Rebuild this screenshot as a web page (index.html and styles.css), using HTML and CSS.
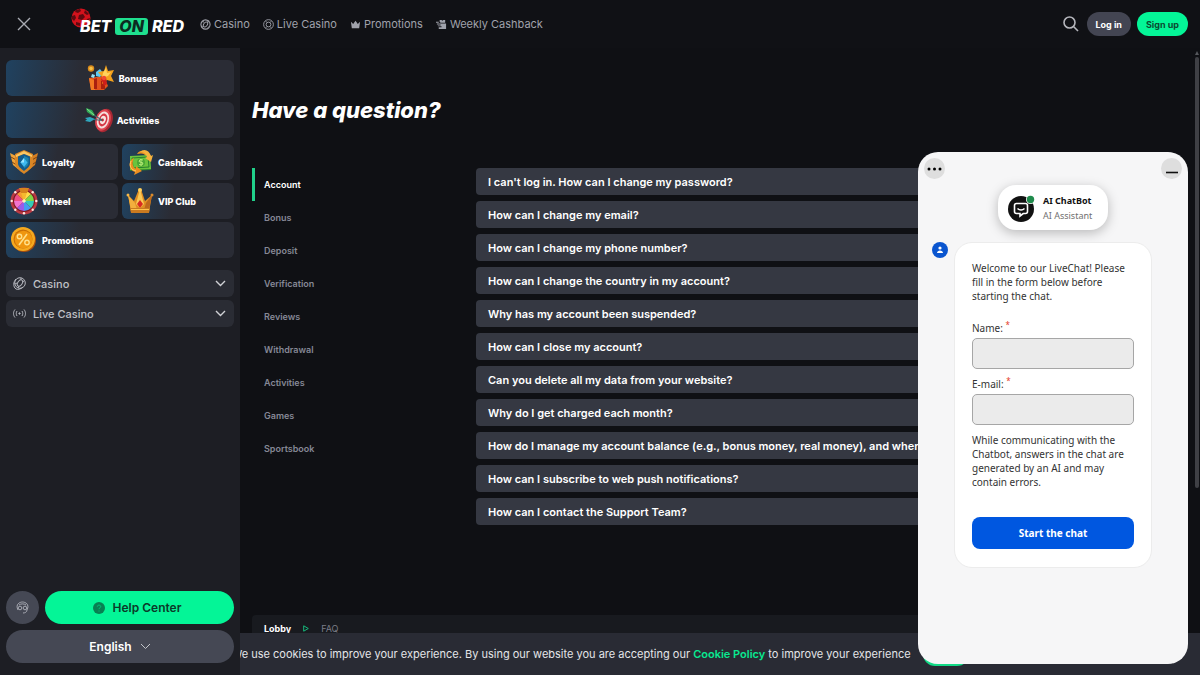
FILE: index.html
```html
<!DOCTYPE html>
<html lang="en">
<head>
  <meta charset="UTF-8" />
  <meta name="viewport" content="width=device-width, initial-scale=1.0" />
  <title>Have a question? | BetOnRed</title>
  <link rel="stylesheet" href="styles.css">
</head>
<body>
  <header class="header">
    <button class="close-btn" aria-label="Close menu">
      <svg width="14" height="14" viewBox="0 0 14 14"><path d="M1 1l12 12M13 1L1 13" stroke="#a9abb3" stroke-width="1.4" fill="none"/></svg>
    </button>
    <a href="#" class="logo" aria-label="Bet On Red">
      <svg class="logo-ball" width="20" height="20" viewBox="0 0 20 20">
        <circle cx="10" cy="10" r="9.500" fill="#d3121c"/>
        <g fill="#5e0a10">
          <path d="M8 7l4-1 2 3-3 3-4-1z"/>
          <path d="M5 2l4-1 1 2-3 2-3-1z"/>
          <path d="M14 2l4 4-2 1-3-2z"/>
          <path d="M1 8l3-1 1 3-2 3-2-2z"/>
          <path d="M5 14l4 1v3l-4-1z"/>
          <path d="M16 11l3-1-2 5-2-1z"/>
        </g>
      </svg>
      <span>BET</span><span class="logo-on">ON</span><span>RED</span>
    </a>
    <nav class="top-nav">
      <a href="#">
        <svg width="11" height="11" viewBox="0 0 12 12"><circle cx="6" cy="6" r="5" fill="none" stroke="#a0a2ab" stroke-width="1.2"/><ellipse cx="6" cy="6" rx="2" ry="3" fill="none" stroke="#a0a2ab" transform="rotate(35 6 6)"/><path d="M7 1l3 1-1 2zM1 7l2 1-1 2zM8 9l2-1-1 2zM2 3l2-1v2z" fill="#a0a2ab"/></svg>
        Casino</a>
      <a href="#">
        <svg width="11" height="11" viewBox="0 0 12 12" fill="none" stroke="#a0a2ab"><circle cx="6" cy="6" r="5.3"/><circle cx="6" cy="6" r="2.6"/><path d="M3 2l1.2 1.8M9 2L7.800 3.800M3 10l1.200-1.800M9 10L7.800 8.200" stroke-width=".7"/></svg>
        Live Casino</a>
      <a href="#">
        <svg width="11" height="11" viewBox="0 0 12 12"><path d="M1 3l2.500 2.500L6 2l2.500 3.500L11 3l-1 7H2z" fill="#a0a2ab"/></svg>
        Promotions</a>
      <a href="#">
        <svg width="11" height="11" viewBox="0 0 12 12"><path d="M4 3V1h2l1 1 1-1h2v3H5zM1 5h10v6H3V9h3V8H2V7h3V6H1zM0 3h3v1H0z" fill="#a0a2ab"/></svg>
        Weekly Cashback</a>
    </nav>
    <div class="header-right">
      <button class="search-btn" aria-label="Search">
        <svg width="16" height="16" viewBox="0 0 16 16" fill="none" stroke="#b5b6bc" stroke-width="1.6"><circle cx="6.500" cy="6.500" r="5.500"/><path d="M10.500 10.500L15 15"/></svg>
      </button>
      <button class="pill login">Log in</button>
      <button class="pill signup">Sign up</button>
    </div>
  </header>

  <div class="layout">
    <aside class="sidebar">
      <div class="cards">
        <a href="#" class="card wide center">
          <svg width="28" height="28" viewBox="0 0 28 28">
            <path d="M2 14l15-2 4 10-4 4H4z" fill="#e2521c"/><path d="M2 14l7 3-1 9H4z" fill="#f27a24"/>
            <path d="M7 15l3-1v11H7zM14 17l4-1v9h-4z" fill="#a9200f"/>
            <circle cx="4" cy="4.500" r="3.200" fill="#d98a1b"/><circle cx="4" cy="4.500" r="1.800" fill="#f6c34a"/>
            <path d="M9 8l4-3 3 4-3 4-4-1z" fill="#5cc8f2"/><path d="M5 10l3 1-1 3-3-1z" fill="#8fe0f7"/>
            <path d="M19 1l2 6 6-1-3 6 3 6-7-2-5 4V13l-4-5 6-1z" fill="#f4a21d"/><path d="M19 4l1 5 4-1-3 4-6 2 1-5z" fill="#ffd25c"/>
            <path d="M14 15l5-2 1 7-3 2z" fill="#cf1f1a"/><circle cx="17" cy="14" r="2.200" fill="#f04a32"/>
          </svg>
          Bonuses
        </a>
        <a href="#" class="card wide center">
          <svg width="28" height="28" viewBox="0 0 28 28">
            <ellipse cx="19.500" cy="14.500" rx="8" ry="12" fill="#a52833" transform="rotate(18 19.500 14.500)"/>
            <ellipse cx="18" cy="14" rx="7.500" ry="11" fill="#df4551" transform="rotate(18 18 14)"/>
            <ellipse cx="18" cy="14" rx="5.800" ry="8.800" fill="#f6dedd" transform="rotate(18 18 14)"/>
            <ellipse cx="18" cy="14" rx="4.200" ry="6.600" fill="#d63745" transform="rotate(18 18 14)"/>
            <ellipse cx="18" cy="14" rx="2.700" ry="4.200" fill="#f8e5e3" transform="rotate(18 18 14)"/>
            <circle cx="17.500" cy="14" r="1.400" fill="#c22632"/>
            <path d="M7 8l10 6M9 13.500l8 1" stroke="#4a6770" stroke-width="1.200"/>
            <path d="M1 2l6 2 3 5-2 1-6-4z" fill="#31a956"/><path d="M2 3l7 6" stroke="#8be08f"/>
            <path d="M0 12l5-1 5 2-5 3-5-1 2-1.500z" fill="#2fa6bd"/>
          </svg>
          Activities
        </a>
        <a href="#" class="card">
          <svg width="28" height="28" viewBox="0 0 28 28">
            <path d="M0 5l8 4v12L3 17z" fill="#f0a43a"/><path d="M28 5l-8 4v12l5-4z" fill="#d57f22"/>
            <path d="M1 9l7 4M2 14l6 4M27 9l-7 4M26 14l-6 4" stroke="#7b4312"/>
            <path d="M14 2l9 4v9c0 5-5 8-9 11-4-3-9-6-9-11V6z" fill="#d98726"/>
            <path d="M14 3l8 4v2l-8-3-8 3V7z" fill="#f9c663"/>
            <path d="M14 6l6 2.500v7c0 3-3 5-6 7.500-3-2.500-6-4.500-6-7.500v-7z" fill="#125c8d"/>
            <path d="M14 8l4.500 2v5c0 2-2 4-4.500 5.500z" fill="#1c83ad"/>
            <path d="M14 10l3.500 4.500L14 19l-3.500-4.500z" fill="#3eb9ef"/><path d="M14 10v4.500h-3.500z" fill="#9be6ff"/>
          </svg>
          Loyalty
        </a>
        <a href="#" class="card">
          <svg width="28" height="28" viewBox="0 0 28 28">
            <path d="M11 6C14 1 21 2 23 8l2-1-2 6-6-3 3-1c-1-4-5-4-9-3z" fill="#ec9422"/>
            <path d="M4 9l20-1 1 14-21 1z" fill="#267f2e"/><path d="M4 8l20-1 1 14-21 1z" fill="#6bc43d"/>
            <path d="M6 10l16-1 1 10-16 1z" fill="none" stroke="#277f2e"/><circle cx="15" cy="14.500" r="4" fill="#4aa634"/>
            <path d="M17 12l-3-.5-1 2 4 1.500-1 2-3-.5M15 11v7" fill="none" stroke="#b7ec77"/>
            <path d="M14 4c4-4 9-2 11 4l2-1-2 7-6-4 2-1c-1-4-4-5-7-5z" fill="#f6b33d"/>
            <path d="M8 10c-6 2-6 12 1 14l-1 3 8-4-6-5v3c-4-2-4-7-2-11z" fill="#ec8f20"/>
            <path d="M5 13c-2 5 0 9 5 10" stroke="#ffd067" fill="none"/>
          </svg>
          Cashback
        </a>
        <a href="#" class="card">
          <svg width="28" height="28" viewBox="0 0 28 28">
            <circle cx="14" cy="14" r="13.500" fill="#b93a43"/><circle cx="14" cy="14" r="11" fill="#7e1822"/>
            <path d="M14 14V4a10 10 0 0 1 7 3z" fill="#ffdb48"/><path d="M14 14l7-7a10 10 0 0 1 3 7z" fill="#82d646"/>
            <path d="M14 14h10a10 10 0 0 1-3 7z" fill="#36cbb6"/><path d="M14 14l7 7a10 10 0 0 1-7 3z" fill="#459bf1"/>
            <path d="M14 14v10a10 10 0 0 1-7-3z" fill="#9b5be9"/><path d="M14 14l-7 7a10 10 0 0 1-3-7z" fill="#f173cf"/>
            <path d="M14 14H4a10 10 0 0 1 3-7z" fill="#ef4f88"/><path d="M14 14L7 7a10 10 0 0 1 7-3z" fill="#f79a31"/>
            <path d="M10 2h8l-3 10h-2z" fill="#f5b92f"/><path d="M9 1h10l-2 5h-6z" fill="#d7831d"/><circle cx="14" cy="14" r="1.800" fill="#fff0b4"/>
            <g fill="#ffe7e0"><circle cx="1.700" cy="14" r="1.200"/><circle cx="26.300" cy="14" r="1.200"/><circle cx="14" cy="26.300" r="1.200"/><circle cx="5.300" cy="5.300" r="1.200"/><circle cx="22.700" cy="5.300" r="1.200"/><circle cx="5.300" cy="22.700" r="1.200"/><circle cx="22.700" cy="22.700" r="1.200"/></g>
          </svg>
          Wheel
        </a>
        <a href="#" class="card">
          <svg width="28" height="28" viewBox="0 0 28 28">
            <path d="M2 8l6 6 5-12h2l4 12 7-6-3 17H5z" fill="#df8e23"/>
            <path d="M14 2l4 15-4 4-4-4z" fill="#fac956"/><path d="M2 8l7 8 2 7H5z" fill="#f3af3d"/><path d="M26 8l-6 8-2 7h5z" fill="#bd681c"/>
            <path d="M4 21h20l-1 5H5z" fill="#c97a20"/><path d="M5 22.500h18" stroke="#ffc34c"/>
            <path d="M14 13l3 4-3 4-3-4z" fill="#d92a22"/><circle cx="14" cy="3" r="2" fill="#ffcf5b"/><circle cx="2" cy="8" r="1.500" fill="#f7b747"/><circle cx="26" cy="8" r="1.500" fill="#d98b2c"/>
          </svg>
          VIP Club
        </a>
        <a href="#" class="card wide">
          <svg width="28" height="28" viewBox="0 0 28 28">
            <circle cx="14" cy="14" r="12" fill="#a94e0c"/><circle cx="13" cy="13" r="12" fill="#f5a91f"/>
            <circle cx="13" cy="13" r="9.500" fill="#c97007"/><circle cx="13.500" cy="13.500" r="8.800" fill="#ef960f"/>
            <path d="M17 8L9 19" stroke="#ffe08a" stroke-width="1.600"/><circle cx="9.500" cy="10.500" r="2.200" fill="none" stroke="#ffe08a" stroke-width="1.400"/><circle cx="17" cy="16.500" r="2.200" fill="none" stroke="#ffe08a" stroke-width="1.400"/>
          </svg>
          Promotions
        </a>
      </div>

      <div class="menu">
        <button class="menu-item">
          <svg width="13" height="13" viewBox="0 0 13 13" fill="none" stroke="#b4b6bd"><circle cx="7" cy="6" r="5.300"/><path d="M3 2C0 5 0 10 3 12c2 1 5 0 7-2"/><ellipse cx="7" cy="6" rx="2.200" ry="3.500" transform="rotate(35 7 6)"/><path d="M8 1v2M11 4l-2 1M2 7l2-1M6 9l-1 2"/></svg>
          <span>Casino</span>
          <svg class="arrow" width="11" height="7" viewBox="0 0 11 7"><path d="M1 1l4.500 4.500L10 1" fill="none" stroke="#d0d1d5" stroke-width="1.400"/></svg>
        </button>
        <button class="menu-item">
          <svg width="13" height="13" viewBox="0 0 13 13" fill="none" stroke="#b4b6bd"><circle cx="6.500" cy="6.500" r=".7" fill="#b4b6bd"/><path d="M2 2.500C0 5 0 8 2 10.500M4 4c-1 2-1 3 0 5M11 2.500c2 2.500 2 5.500 0 8M9 4c1 2 1 3 0 5"/></svg>
          <span>Live Casino</span>
          <svg class="arrow" width="11" height="7" viewBox="0 0 11 7"><path d="M1 1l4.500 4.500L10 1" fill="none" stroke="#d0d1d5" stroke-width="1.400"/></svg>
        </button>
      </div>

      <div class="sidebar-bottom">
        <div class="help-row">
          <button class="support-btn" aria-label="Support">
            <svg width="13" height="13" viewBox="0 0 13 13" fill="none" stroke="#a7a9b2"><path d="M2 9C-1 3 4 1 6.500 1S14 3 11 9"/><circle cx="4" cy="7" r="1.800"/><circle cx="9" cy="7" r="1.800"/><path d="M3 4c2-1.500 5-1.500 7 0M11 9c0 2-2 3-4 3"/></svg>
          </button>
          <button class="help-btn">
            <svg width="12" height="12" viewBox="0 0 12 12"><circle cx="6" cy="6" r="6" fill="#087f52"/><path d="M4.300 4.700C4.300 2.500 8 2.700 7.700 4.800 7.500 5.900 6 5.800 6 7.200M6 8.500v1" fill="none" stroke="#03c87d" stroke-width=".9"/></svg>
            Help Center
          </button>
        </div>
        <button class="lang-btn">English
          <svg width="11" height="7" viewBox="0 0 11 7"><path d="M1 1l4.500 4.500L10 1" fill="none" stroke="#c3c5ca"/></svg>
        </button>
      </div>
    </aside>

    <main class="content">
      <h1>Have a question?</h1>
      <div class="faq">
        <nav class="tabs">
          <a href="#" class="active">Account</a>
          <a href="#">Bonus</a>
          <a href="#">Deposit</a>
          <a href="#">Verification</a>
          <a href="#">Reviews</a>
          <a href="#">Withdrawal</a>
          <a href="#">Activities</a>
          <a href="#">Games</a>
          <a href="#">Sportsbook</a>
        </nav>
        <div class="questions">
          <button>I can't log in. How can I change my password?</button>
          <button>How can I change my email?</button>
          <button>How can I change my phone number?</button>
          <button>How can I change the country in my account?</button>
          <button>Why has my account been suspended?</button>
          <button>How can I close my account?</button>
          <button>Can you delete all my data from your website?</button>
          <button>Why do I get charged each month?</button>
          <button>How do I manage my account balance (e.g., bonus money, real money), and where can I see it?</button>
          <button>How can I subscribe to web push notifications?</button>
          <button>How can I contact the Support Team?</button>
        </div>
      </div>
      <div class="breadcrumbs">
        <a href="#">Lobby</a>
        <svg width="6" height="7" viewBox="0 0 6 7"><path d="M.7.800L5.300 3.500.700 6.200z" fill="none" stroke="#17b97d"/></svg>
        <span>FAQ</span>
      </div>
    </main>
    <div class="scrollbar" aria-hidden="true">
      <div class="scroll-up"></div>
      <div class="scroll-thumb"></div>
    </div>
  </div>

  <div class="cookies">
    <p>We use cookies to improve your experience. By using our website you are accepting our <a href="#">Cookie Policy</a> to improve your experience</p>
    <button>OK</button>
  </div>

  <section class="chat" aria-label="LiveChat">
    <div class="chat-top">
      <button aria-label="Chat options">
        <svg width="15" height="4" viewBox="0 0 15 4"><circle cx="2" cy="2" r="1.500"/><circle cx="7.500" cy="2" r="1.500"/><circle cx="13" cy="2" r="1.500"/></svg>
      </button>
      <button aria-label="Minimize chat">
        <svg width="12" height="12" viewBox="0 0 12 12"><path d="M0 9.500h12" stroke="#111" stroke-width="1.600"/></svg>
      </button>
    </div>
    <div class="agent">
      <svg width="28" height="28" viewBox="0 0 28 28">
        <circle cx="14" cy="15" r="13" fill="#111"/>
        <path d="M9.500 9.500h9a2 2 0 0 1 2 2v6a2 2 0 0 1-2 2h-2.300L13 22v-2.500H9.500a2 2 0 0 1-2-2v-6a2 2 0 0 1 2-2z" fill="none" stroke="#fff" stroke-width="1.600"/>
        <path d="M10.500 14.500c2 2 5 2 7 0" fill="none" stroke="#fff" stroke-width="1.500"/>
        <circle cx="23.500" cy="5.500" r="4.500" fill="#fff"/><circle cx="23.500" cy="5.500" r="3.700" fill="#1f8b4c"/>
      </svg>
      <div>
        <strong>AI ChatBot</strong>
        <span>AI Assistant</span>
      </div>
    </div>
    <div class="chat-body">
      <svg class="avatar" width="16" height="16" viewBox="0 0 16 16"><circle cx="8" cy="8" r="8" fill="#0a55cf"/><circle cx="8" cy="6" r="1.600" fill="#fff"/><path d="M5 11c0-3.500 6-3.500 6 0z" fill="#fff"/></svg>
      <form class="chat-form">
        <p>Welcome to our LiveChat! Please fill in the form below before starting the chat.</p>
        <label for="name">Name: <sup>*</sup></label>
        <input type="text" id="name" />
        <label for="email">E-mail: <sup>*</sup></label>
        <input type="email" id="email" />
        <p class="note">While communicating with the Chatbot, answers in the chat are generated by an AI and may contain errors.</p>
        <button type="button">Start the chat</button>
      </form>
    </div>
  </section>
</body>
</html>
```

FILE: styles.css
```css
* {
  box-sizing: border-box;
}

body {
  margin: 0;
  height: 100vh;
  display: flex;
  flex-direction: column;
  overflow: hidden;
  background: #0f1014;
  color: #fff;
  font-family: Inter, "Liberation Sans", sans-serif;
  font-size: 11px;
}

a {
  color: inherit;
  text-decoration: none;
}

button {
  font: inherit;
  color: inherit;
  border: none;
  padding: 0;
  background: none;
  cursor: pointer;
}

svg {
  flex: none;
}

/* header */
.header {
  flex: none;
  height: 48px;
  display: flex;
  align-items: center;
  padding: 0 12px 0 17px;
  background: #101115;
}

.close-btn {
  display: flex;
  margin-right: 40px;
}

.logo {
  position: relative;
  display: flex;
  align-items: center;
  gap: 4px;
  padding: 4px 0 0 9px;
  margin-right: 16px;
  font-size: 16px;
  line-height: 17px;
  font-weight: 800;
  font-style: italic;
}

.logo span {
  position: relative;
}

.logo-ball {
  position: absolute;
  left: 0;
  top: -6px;
}

.logo-on {
  padding: 0 4px;
  border-radius: 3px;
  background: #1fe08f;
  color: #0c2b20;
}

.top-nav {
  display: flex;
  gap: 13px;
  color: #a0a2ab;
}

.top-nav a {
  display: flex;
  align-items: center;
  gap: 3px;
}

.header-right {
  margin-left: auto;
  display: flex;
  align-items: center;
  gap: 6px;
}

.search-btn {
  display: flex;
  margin-right: 2px;
}

.pill {
  height: 24px;
  padding: 0 9px;
  border-radius: 12px;
  font-size: 9px;
  font-weight: 700;
}

.login {
  background: #434552;
}

.signup {
  background: #04f597;
  color: #0b4a31;
}

.layout {
  flex: 1;
  min-height: 0;
  display: flex;
}

/* sidebar */
.sidebar {
  position: relative;
  z-index: 3;
  flex: none;
  width: 240px;
  display: flex;
  flex-direction: column;
  padding: 12px 6px;
  background: #1d1e24;
}

.cards {
  display: grid;
  grid-template-columns: 1fr 1fr;
  gap: 3px 4px;
}

.card {
  height: 36px;
  display: flex;
  align-items: center;
  gap: 4px;
  padding-left: 4px;
  border-radius: 6px;
  background: linear-gradient(100deg, #204260 0%, #2a2c35 45%);
  font-size: 9px;
  font-weight: 800;
}

.card.wide {
  grid-column: span 2;
  background: linear-gradient(100deg, #204260 0%, #2a2c35 32%);
}

.card.center {
  justify-content: center;
  margin-bottom: 3px;
}

.menu {
  display: flex;
  flex-direction: column;
  gap: 3px;
  margin-top: 12px;
}

.menu-item {
  height: 27px;
  display: flex;
  align-items: center;
  gap: 7px;
  padding: 0 8px 0 7px;
  border-radius: 6px;
  background: #2a2c34;
  color: #c0c1c7;
  font-weight: 500;
}

.arrow {
  margin-left: auto;
}

.sidebar-bottom {
  margin-top: auto;
  display: flex;
  flex-direction: column;
  gap: 6px;
}

.help-row {
  display: flex;
  gap: 6px;
}

.support-btn,
.help-btn,
.lang-btn {
  height: 33px;
  display: flex;
  align-items: center;
  justify-content: center;
  gap: 8px;
  border-radius: 17px;
  background: #454854;
  font-size: 12px;
  font-weight: 600;
}

.support-btn {
  width: 33px;
}

.help-btn {
  flex: 1;
  padding-right: 5px;
  background: #04f597;
  color: #0b3a29;
}

/* page */
.content {
  flex: 1;
  min-width: 0;
  display: flex;
  flex-direction: column;
  padding: 46px 12px 0;
}

h1 {
  margin: 0;
  font-size: 22px;
  line-height: 32px;
  font-weight: 800;
  font-style: italic;
}

.faq {
  display: flex;
  margin-top: 42px;
}

.tabs {
  flex: none;
  width: 224px;
}

.tabs a {
  display: block;
  padding-left: 9px;
  border-left: 3px solid transparent;
  line-height: 33px;
  font-size: 9px;
  font-weight: 600;
  color: #868896;
}

.tabs .active {
  border-color: #20d08a;
  color: #fff;
}

.questions {
  flex: 1;
  min-width: 0;
  display: flex;
  flex-direction: column;
  gap: 6px;
}

.questions button {
  height: 27px;
  padding: 0 12px;
  border-radius: 4px;
  background: #353842;
  font-weight: 600;
  text-align: left;
  white-space: nowrap;
  overflow: hidden;
}

.breadcrumbs {
  display: flex;
  align-items: center;
  gap: 12px;
  height: 27px;
  flex: none;
  margin-top: 90px;
  padding: 0 12px;
  border-radius: 4px;
  background: #181a1f;
  font-size: 9px;
  color: #7b7d87;
}

.breadcrumbs a {
  color: #fff;
  font-weight: 700;
}

.scrollbar {
  width: 6px;
  padding: 3px 1px 0;
}

.scroll-up {
  border: 2px solid transparent;
  border-top: 0;
  border-bottom: 4px solid #55575c;
}

.scroll-thumb {
  height: 69%;
  margin-top: 2px;
  border-radius: 2px;
  background: #3f4045;
}

.cookies {
  position: fixed;
  z-index: 2;
  left: 0;
  right: 0;
  bottom: 0;
  height: 42px;
  display: flex;
  align-items: center;
  justify-content: center;
  gap: 12px;
  background: #292b34;
  color: #e4e5e8;
  white-space: nowrap;
}

.cookies p {
  margin: 0;
}

.cookies a {
  color: #08e890;
  font-weight: 600;
}

.cookies button {
  width: 46px;
  height: 24px;
  border-radius: 12px;
  background: #12db87;
  color: #0b3a29;
}

/* chat widget */
.chat {
  position: fixed;
  z-index: 4;
  right: 12px;
  bottom: 11px;
  width: 270px;
  height: 512px;
  padding: 6px;
  border-radius: 20px;
  background: #f6f6f7;
  color: #333;
  font-family: "Noto Sans", "Open Sans", sans-serif;
  font-size: 10px;
}

.chat-top {
  display: flex;
  justify-content: space-between;
}

.chat-top button {
  width: 21px;
  height: 21px;
  display: flex;
  align-items: center;
  justify-content: center;
  border-radius: 50%;
  background: #dedede;
}

.agent {
  width: 110px;
  height: 45px;
  margin: 6px auto 0;
  display: flex;
  align-items: center;
  gap: 8px;
  padding-left: 9px;
  border-radius: 18px;
  background: #fff;
  box-shadow: 0 3px 12px rgba(0, 0, 0, 0.25);
  font-size: 9px;
  line-height: 15px;
  white-space: nowrap;
}

.agent strong,
.agent span {
  display: block;
}

.agent strong {
  color: #111;
}

.agent span {
  color: #707070;
}

.chat-body {
  display: flex;
  align-items: flex-start;
  gap: 6px;
  margin-top: 12px;
  padding: 0 30px 0 8px;
}

.chat-form {
  flex: 1;
  display: flex;
  flex-direction: column;
  padding: 18px 17px;
  border: 1px solid #ececec;
  border-radius: 18px;
  background: #fff;
  line-height: 14px;
}

.chat-form p {
  margin: 0 0 18px;
}

.chat-form sup {
  color: #e5391f;
  font-size: 8px;
  line-height: 0;
}

.chat-form input {
  width: 100%;
  height: 31px;
  margin: 3px 0 8px;
  border: 1px solid #a6a6a6;
  border-radius: 5px;
  background: #ebebeb;
}

.chat-form .note {
  margin-bottom: 28px;
}

.chat-form button {
  height: 32px;
  border-radius: 8px;
  background: #0057e0;
  color: #fff;
  font-weight: 700;
}
```
